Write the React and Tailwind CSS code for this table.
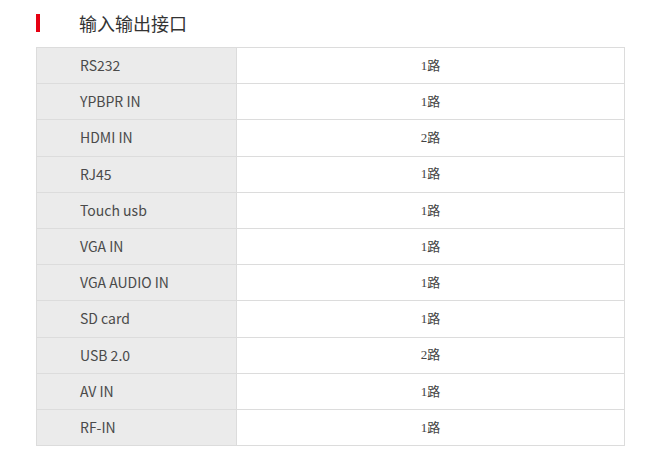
const rows = [
  ['RS232', '1路'],
  ['YPBPR IN', '1路'],
  ['HDMI IN', '2路'],
  ['RJ45', '1路'],
  ['Touch usb', '1路'],
  ['VGA IN', '1路'],
  ['VGA AUDIO IN', '1路'],
  ['SD card', '1路'],
  ['USB 2.0', '2路'],
  ['AV IN', '1路'],
  ['RF-IN', '1路'],
];

export default function App() {
  return (
    <div className="w-[656px] h-[464px] bg-white pt-[14px] pl-[36px] font-['Noto_Sans_CJK_SC',sans-serif]">
      <div className="flex items-center h-[18px]">
        <div className="w-[4px] h-[18px] bg-[#e60012]" />
        <h2 className="ml-[39px] text-[18px] leading-[18px] text-[#333]">
          输入输出接口
        </h2>
      </div>
      <table className="mt-[15px] w-[589px] border-collapse">
        <tbody>
          {rows.map(([name, count]) => (
            <tr key={name} className="h-[36.2px]">
              <td className="w-[200px] bg-[#ebebeb] border border-[#dcdcdc] pl-[43px] text-[14px] text-[#4a4a4a]">
                {name}
              </td>
              <td className="border border-[#dcdcdc] text-center text-[13px] text-[#444] font-['Liberation_Serif','Noto_Sans_CJK_SC',serif]">
                {count}
              </td>
            </tr>
          ))}
        </tbody>
      </table>
    </div>
  );
}
